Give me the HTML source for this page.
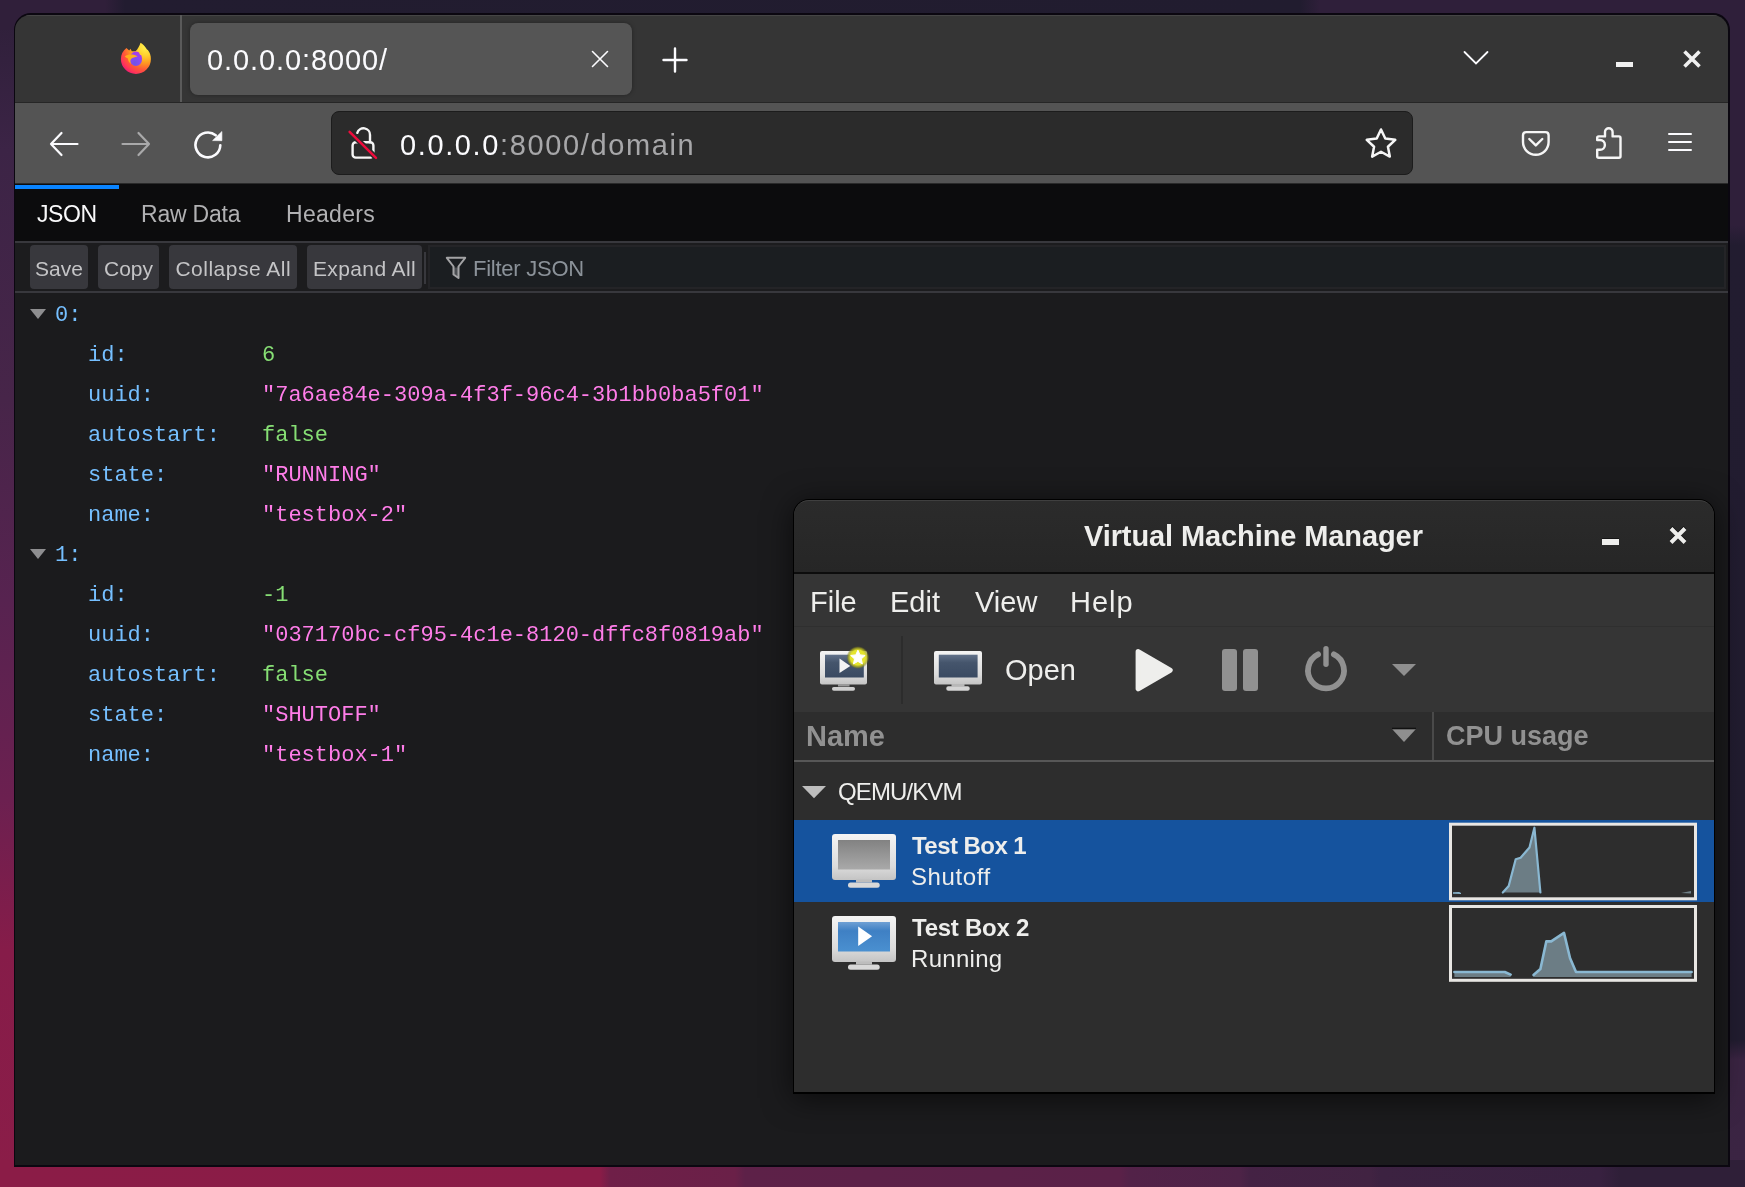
<!DOCTYPE html>
<html><head><meta charset="utf-8">
<style>
*{box-sizing:border-box;margin:0;padding:0}
html,body{width:1745px;height:1187px;overflow:hidden}
body>div,body>svg{will-change:transform}
body{position:relative;font-family:"Liberation Sans",sans-serif;background:#2a1f36;}
.a{position:absolute}
#bgr{left:1715px;top:0;width:30px;height:1187px;background:linear-gradient(180deg,#2f1f3a 0px,#2f1f3a 225px,#221c30 245px,#211c2f 1040px,#3a2442 1060px,#3b2443 1187px)}
#bgl{left:0;top:0;width:30px;height:1187px;background:linear-gradient(180deg,#2e2039 0px,#33213e 60px,#3c2446 150px,#472549 400px,#572350 600px,#6c2050 800px,#861c49 950px,#8b1d48 1187px)}
#bgt{left:0;top:0;width:1745px;height:30px;background:linear-gradient(90deg,#301f3a 0px,#301f3a 105px,#221c30 125px,#211c2f 1300px,#2f1f3a 1320px,#2f1f3a 1745px)}
#bgb{left:0;top:1160px;width:1745px;height:27px;background:linear-gradient(90deg,#8b1c47 0px,#8a1c47 600px,#6f1f48 610px,#6a2048 735px,#5d2148 745px,#5a2148 1120px,#522248 1130px,#4d2347 1240px,#442244 1250px,#412342 1370px,#3c2241 1380px,#382140 1600px,#2f1f38 1620px,#2f1f38 1745px)}
#ff{left:14px;top:13px;width:1716px;height:1154px;background:#0b0710;border-radius:17px 17px 0 0}
#ffi{left:15px;top:15px;width:1713px;height:1150px;background:#1b1b1d;border-radius:15.5px 15.5px 0 0;overflow:hidden}
#tabs{left:0;top:0;width:1713px;height:88px;background:#353535;border-top:1px solid #454545;border-bottom:1px solid #262626}
#nav{left:0;top:88px;width:1713px;height:80px;background:#545454}
#navb{left:0;top:168px;width:1713px;height:1px;background:#2a2a2a}
#jtabs{left:0;top:169px;width:1713px;height:57px;background:#0c0c0d}
#jline1{left:0;top:226px;width:1713px;height:2px;background:#38383d}
#jtool{left:0;top:228px;width:1713px;height:48px;background:#1c1c1e}
#jline2{left:0;top:276px;width:1713px;height:2px;background:#38383d}
.mono{font-family:"Liberation Mono",monospace;font-size:22px}
.mono span{white-space:pre}

.btn{top:245px;height:44px;background:#38383d;border-radius:4px;color:#c4c4c6;font-size:21px;line-height:47px;text-align:center}
#json .jr{position:relative;height:40px}
#json .k{position:absolute;left:88px;top:0;line-height:40px;color:#75bfff}
#json .v{position:absolute;left:262px;top:0;line-height:40px}
#json .n{color:#86de74}
#json .s{color:#ff7de9}
#json .tw{position:absolute;left:30px;top:13px;width:0;height:0;border-left:8px solid transparent;border-right:8px solid transparent;border-top:10px solid #8e8e90}

.vt{color:#eeeeec;white-space:pre}
</style></head><body>
<div class="a" id="bgl"></div><div class="a" id="bgt"></div><div class="a" id="bgr"></div>
<div class="a" id="bgb"></div>
<div class="a" id="ff"></div>
<div class="a" id="ffi">
 <div class="a" id="tabs"></div>
 <div class="a" id="nav"></div>
 <div class="a" id="navb"></div>
 <div class="a" id="jtabs"></div>
 <div class="a" id="jline1"></div>
 <div class="a" id="jtool"></div>
 <div class="a" id="jline2"></div>
</div>

<!-- firefox logo -->
<svg class="a" style="left:118px;top:40px" width="36" height="36" viewBox="0 0 36 36">
 <defs>
  <radialGradient id="fg1" cx="0.82" cy="0.12" r="1.05"><stop offset="0" stop-color="#fff44f"/><stop offset="0.28" stop-color="#ffd02e"/><stop offset="0.5" stop-color="#ff9a22"/><stop offset="0.7" stop-color="#ff5a36"/><stop offset="0.85" stop-color="#ff3756"/><stop offset="1" stop-color="#e8127c"/></radialGradient>
  <radialGradient id="fg2" cx="0.4" cy="0.8" r="0.9"><stop offset="0" stop-color="#6f54e6"/><stop offset="0.5" stop-color="#8c4af5"/><stop offset="1" stop-color="#b833e1"/></radialGradient>
 </defs>
 <path d="M8.4 7.9 C5 10.5 2.9 14.5 2.9 19 A15 15 0 0 0 32.9 19 C32.9 15.5 32 12.5 29.8 10 L29 9.5 C27 6 24.5 4 22.5 2.7 C21.5 6 19.5 9.5 17.5 11.2 L13.8 11.2 L12.5 8.8 L11.2 10.5 Z" fill="url(#fg1)"/>
 <ellipse cx="17.9" cy="18.8" rx="6.2" ry="7.3" fill="url(#fg2)"/>
 <path d="M21 12 C23 12.3 24.5 13.5 25.5 15 C24 14.5 23 14.6 22 15 Z" fill="#ffcf30"/>
 <path d="M6.8 16.5 C9 14.5 13 14 16.5 15 C18 15.5 19 16 19.5 16.5 C17 17.5 14.5 17.5 13 19 C12 20.5 12.3 22.5 13 24 C11 22.5 10 20.5 10 18.5 C8.5 18 7.5 17.3 6.8 16.5 Z" fill="#ffae1c"/>
</svg>
<div class="a" style="left:180px;top:15px;width:2px;height:87px;background:#5a5a5a"></div>
<!-- tab -->
<div class="a" style="left:190px;top:23px;width:442px;height:72px;background:#555555;border-radius:8px;box-shadow:0 0 4px rgba(0,0,0,0.35)"></div>
<div class="a" id="tabtitle" style="left:207px;top:43px;font-size:29px;letter-spacing:0.9px;color:#fbfbfe;white-space:pre;line-height:34px">0.0.0.0:8000/</div>
<svg class="a" style="left:590px;top:49px" width="20" height="20" viewBox="0 0 20 20"><path d="M2.5 2.5 L17.5 17.5 M17.5 2.5 L2.5 17.5" stroke="#fbfbfe" stroke-width="1.6" stroke-linecap="round"/></svg>
<svg class="a" style="left:661px;top:46px" width="28" height="28" viewBox="0 0 28 28"><path d="M14 2.5 V25.5 M2.5 14 H25.5" stroke="#fbfbfe" stroke-width="2.4" stroke-linecap="round"/></svg>
<svg class="a" style="left:1462px;top:48px" width="28" height="20" viewBox="0 0 28 20"><path d="M2.5 4 L14 15.5 L25.5 4" fill="none" stroke="#fbfbfe" stroke-width="1.8" stroke-linecap="round"/></svg>
<div class="a" style="left:1616px;top:62px;width:17px;height:5px;background:#f0f0f0"></div>
<svg class="a" style="left:1681px;top:48px" width="22" height="22" viewBox="0 0 22 22"><path d="M3.5 3.5 L18.5 18.5 M18.5 3.5 L3.5 18.5" stroke="#f0f0f0" stroke-width="3.6" stroke-linecap="butt"/></svg>
<!-- nav -->
<svg class="a" style="left:46px;top:128px" width="36" height="32" viewBox="0 0 36 32"><path d="M5 16 H31.5 M15.5 5 L5 16 L15.5 27" fill="none" stroke="#fbfbfe" stroke-width="2.2" stroke-linecap="round" stroke-linejoin="round"/></svg>
<svg class="a" style="left:118px;top:128px" width="36" height="32" viewBox="0 0 36 32"><path d="M4.5 16 H31 M20.5 5 L31 16 L20.5 27" fill="none" stroke="#a9a9aa" stroke-width="2.2" stroke-linecap="round" stroke-linejoin="round"/></svg>
<svg class="a" style="left:190px;top:127px" width="36" height="36" viewBox="0 0 36 36"><path d="M30.3 18.3 A12.4 12.4 0 1 1 25.7 8.3" fill="none" stroke="#fbfbfe" stroke-width="2.6" stroke-linecap="round"/><path d="M22.6 13.6 L31.9 4.5 L31.9 13.7 Z" fill="#fbfbfe" stroke="#fbfbfe" stroke-width="0.6" stroke-linejoin="round"/></svg>
<div class="a" style="left:331px;top:111px;width:1082px;height:64px;background:#2b2b2b;border:1px solid #1c1c1c;border-radius:8px"></div>
<svg class="a" style="left:346px;top:124px" width="34" height="38" viewBox="0 0 34 38"><path d="M11.3 8.8 A6.5 6.5 0 0 1 24 11 V18.2" fill="none" stroke="#f6f6f6" stroke-width="2.4" stroke-linecap="round"/><rect x="6.6" y="18.2" width="20.8" height="15.4" rx="3.2" fill="none" stroke="#f6f6f6" stroke-width="2.4"/><path d="M3.6 7.8 L30 33.8" stroke="#2b2b2b" stroke-width="5.5"/><path d="M3.6 7.8 L30 33.8" stroke="#ee0c3c" stroke-width="2.5" stroke-linecap="round"/></svg>
<div class="a" id="urltext" style="left:400px;top:127.5px;font-size:29px;letter-spacing:1.62px;color:#a7a7a9;white-space:pre;line-height:34px"><span style="color:#fbfbfe">0.0.0.0</span>:8000/domain</div>
<svg class="a" style="left:1362px;top:125px" width="38" height="36" viewBox="0 0 38 36"><path d="M19.00 4.46 L23.29 13.55 L33.27 14.82 L25.94 21.72 L27.82 31.60 L19.00 26.76 L10.18 31.60 L12.06 21.72 L4.73 14.82 L14.71 13.55 Z" fill="none" stroke="#f6f6f6" stroke-width="2.5" stroke-linejoin="round"/></svg>
<svg class="a" style="left:1519px;top:128px" width="34" height="32" viewBox="0 0 34 32"><path d="M4 14 V7.3 Q4 4.1 7.2 4.1 H26.4 Q29.6 4.1 29.6 7.3 V14 A12.8 12.8 0 0 1 4 14 Z" fill="none" stroke="#f6f6f6" stroke-width="2.4" stroke-linejoin="round"/><path d="M10.3 11 L16.8 17.4 L23.3 11" fill="none" stroke="#f6f6f6" stroke-width="2.4" stroke-linecap="round" stroke-linejoin="round"/></svg>
<svg class="a" style="left:1593px;top:124px" width="34" height="38" viewBox="0 0 34 38"><path d="M4.2 16 V13.9 Q4.2 12.4 5.7 12.4 H12 V8 A3.8 3.8 0 0 1 19.6 8 V12.4 H26 Q27.5 12.4 27.5 13.9 V32.3 Q27.5 33.8 26 33.8 H5.7 Q4.2 33.8 4.2 32.3 V25.8 H7 A4.9 4.9 0 0 0 7 16 Z" fill="none" stroke="#f6f6f6" stroke-width="2.4" stroke-linejoin="round"/></svg>
<div class="a" style="left:1668px;top:133px;width:24px;height:2.3px;background:#fbfbfe;border-radius:1px"></div>
<div class="a" style="left:1668px;top:141px;width:24px;height:2.3px;background:#fbfbfe;border-radius:1px"></div>
<div class="a" style="left:1668px;top:149px;width:24px;height:2.3px;background:#fbfbfe;border-radius:1px"></div>

<!-- devtools json viewer -->
<div class="a" style="left:15px;top:185px;width:104px;height:4px;background:#0a84ff"></div>
<div class="a" id="tJSON" style="left:37px;top:200px;font-size:23px;line-height:28px;color:#f9f9fa;letter-spacing:-0.4px">JSON</div>
<div class="a" id="tRaw" style="left:141px;top:200px;font-size:23px;line-height:28px;color:#b1b1b3;letter-spacing:-0.2px">Raw Data</div>
<div class="a" id="tHead" style="left:286px;top:200px;font-size:23px;line-height:28px;color:#b1b1b3;letter-spacing:0.3px">Headers</div>
<div class="a btn" style="left:30px;width:58px">Save</div>
<div class="a btn" style="left:98px;width:61px">Copy</div>
<div class="a btn" style="left:169px;width:128px;letter-spacing:0.5px;text-indent:0.5px">Collapse All</div>
<div class="a btn" style="left:307px;width:115px;letter-spacing:0.4px">Expand All</div>
<div class="a" style="left:424px;top:252px;width:2px;height:32px;background:#38383d"></div>
<div class="a" style="left:428px;top:245px;width:1298px;height:44px;background:#1b1e21;border:2px solid #242427"></div>
<svg class="a" style="left:443px;top:254px" width="26" height="28" viewBox="0 0 26 28"><path d="M10.5 13.5 L15.5 13.5 L15.5 23 L11 20.5 Z" fill="#4a4d51"/><path d="M3.8 3.8 H22.2 L15.5 12.5 V24 L10.5 20.5 V12.5 Z" fill="none" stroke="#a3a3a5" stroke-width="2" stroke-linejoin="round"/></svg>
<div class="a" id="tFilter" style="left:473px;top:256px;font-size:22px;line-height:26px;color:#8b9299;letter-spacing:-0.25px">Filter JSON</div>
<div class="a mono" id="json" style="left:0;top:295.5px;width:790px">
<div class="jr"><span class="tw"></span><span class="k" style="left:55px">0:</span></div>
<div class="jr"><span class="k">id:</span><span class="v n">6</span></div>
<div class="jr"><span class="k">uuid:</span><span class="v s">"7a6ae84e-309a-4f3f-96c4-3b1bb0ba5f01"</span></div>
<div class="jr"><span class="k">autostart:</span><span class="v n">false</span></div>
<div class="jr"><span class="k">state:</span><span class="v s">"RUNNING"</span></div>
<div class="jr"><span class="k">name:</span><span class="v s">"testbox-2"</span></div>
<div class="jr"><span class="tw"></span><span class="k" style="left:55px">1:</span></div>
<div class="jr"><span class="k">id:</span><span class="v n">-1</span></div>
<div class="jr"><span class="k">uuid:</span><span class="v s">"037170bc-cf95-4c1e-8120-dffc8f0819ab"</span></div>
<div class="jr"><span class="k">autostart:</span><span class="v n">false</span></div>
<div class="jr"><span class="k">state:</span><span class="v s">"SHUTOFF"</span></div>
<div class="jr"><span class="k">name:</span><span class="v s">"testbox-1"</span></div>
</div>

<!-- VMM window -->
<div class="a" style="left:793px;top:499px;width:922px;height:595px;background:#000;border-radius:16px 16px 0 0;box-shadow:0 4px 30px rgba(0,0,0,0.6)"></div>
<div class="a" style="left:794px;top:500px;width:920px;height:592px;background:#2d2d2d;border-radius:15px 15px 0 0;overflow:hidden">
 <div class="a" style="left:0;top:0;width:920px;height:72px;background:linear-gradient(#2b2b2b,#262626);border-top:1.5px solid #3f3f3f;border-radius:15px 15px 0 0"></div>
 <div class="a" style="left:0;top:72px;width:920px;height:2px;background:#0c0c0c"></div>
 <div class="a" style="left:0;top:74px;width:920px;height:52px;background:#353535"></div>
 <div class="a" style="left:0;top:126px;width:920px;height:1px;background:#2f2f2f"></div>
 <div class="a" style="left:0;top:127px;width:920px;height:85px;background:#353535"></div>
 <div class="a" style="left:0;top:212px;width:920px;height:48px;background:#2d2d2d"></div>
 <div class="a" style="left:0;top:260px;width:920px;height:2px;background:#575757"></div>
 <div class="a" style="left:638px;top:212px;width:2px;height:48px;background:#4a4a4a"></div>
 <div class="a" style="left:0;top:320px;width:920px;height:82px;background:#15539e"></div>
</div>
<div class="a vt" id="vtitle" style="left:1083.5px;top:518px;font-size:29px;font-weight:bold;line-height:36px;letter-spacing:-0.1px">Virtual Machine Manager</div>
<div class="a" style="left:1602px;top:538.5px;width:16.5px;height:6px;background:#eeeeec;box-shadow:0 -1px 0 #151515"></div>
<svg class="a" style="left:1666px;top:524px" width="24" height="24" viewBox="0 0 24 24"><path d="M5 4.5 L19 18.5 M19 4.5 L5 18.5" stroke="#111" stroke-width="4" transform="translate(0,-1)"/><path d="M5 4.5 L19 18.5 M19 4.5 L5 18.5" stroke="#eeeeec" stroke-width="4"/></svg>
<div class="a vt" style="left:810px;top:584px;font-size:29px;line-height:36px">File</div>
<div class="a vt" style="left:890px;top:584px;font-size:29px;line-height:36px">Edit</div>
<div class="a vt" style="left:974.5px;top:584px;font-size:29px;line-height:36px">View</div>
<div class="a vt" style="left:1069.5px;top:584px;font-size:29px;line-height:36px;letter-spacing:1px">Help</div>
<div class="a vt" style="left:1005px;top:652px;font-size:29px;line-height:36px">Open</div>
<div class="a" style="left:901px;top:636px;width:2px;height:68px;background:#2c2c2c"></div>
<div class="a vt" style="left:806px;top:718px;font-size:29px;font-weight:bold;line-height:36px;color:#919191">Name</div>
<div class="a vt" style="left:1446px;top:718px;font-size:27px;font-weight:bold;line-height:36px;color:#919191">CPU usage</div>
<div class="a vt" style="left:838px;top:775.5px;font-size:24px;line-height:32px;letter-spacing:-0.9px">QEMU/KVM</div>
<div class="a vt" style="left:912px;top:830px;font-size:24px;font-weight:bold;line-height:32px;letter-spacing:-0.55px">Test Box 1</div>
<div class="a vt" style="left:911px;top:861px;font-size:24px;line-height:32px;letter-spacing:0.6px">Shutoff</div>
<div class="a vt" style="left:912px;top:912px;font-size:24px;font-weight:bold;line-height:32px;letter-spacing:-0.25px">Test Box 2</div>
<div class="a vt" style="left:911px;top:943px;font-size:24px;line-height:32px;letter-spacing:0.3px">Running</div>

<svg width="0" height="0" style="position:absolute">
 <defs>
  <linearGradient id="bez" x1="0" y1="0" x2="0" y2="1"><stop offset="0" stop-color="#f4f4f4"/><stop offset="0.7" stop-color="#dcdcdc"/><stop offset="1" stop-color="#c4c4c4"/></linearGradient>
  <linearGradient id="scrD" x1="0" y1="0" x2="0" y2="1"><stop offset="0" stop-color="#62728a"/><stop offset="0.35" stop-color="#45556c"/><stop offset="1" stop-color="#3a4a62"/></linearGradient>
  <linearGradient id="scrG" x1="0" y1="0" x2="0" y2="1"><stop offset="0" stop-color="#828282"/><stop offset="1" stop-color="#a9a9a9"/></linearGradient>
  <linearGradient id="scrB" x1="0" y1="0" x2="0" y2="1"><stop offset="0" stop-color="#6fa0d4"/><stop offset="0.3" stop-color="#3f80c4"/><stop offset="1" stop-color="#4a90d0"/></linearGradient>
  <radialGradient id="glow" cx="0.5" cy="0.5" r="0.5"><stop offset="0" stop-color="#f4f440"/><stop offset="0.65" stop-color="#e2e22a"/><stop offset="0.85" stop-color="#a0a020" stop-opacity="0.7"/><stop offset="1" stop-color="#606020" stop-opacity="0"/></radialGradient>
 </defs>
</svg>
<!-- new vm icon -->
<svg class="a" style="left:818px;top:644px" width="54" height="50" viewBox="0 0 54 50">
 <rect x="2" y="7" width="47" height="33.5" rx="2" fill="url(#bez)"/>
 <rect x="7" y="10.7" width="38.8" height="22.8" fill="url(#scrD)"/>
 <rect x="20" y="40" width="11.5" height="2.5" fill="#9a9a9a"/>
 <rect x="14" y="42.9" width="23" height="3.8" rx="1.8" fill="#cfcfcf"/>
 <path d="M21.5 14.5 L32.3 22 L21.5 29 Z" fill="#f4f4f4"/>
 <circle cx="39.9" cy="13.5" r="11.5" fill="url(#glow)"/>
 <circle cx="39.9" cy="13.5" r="7.5" fill="#e4e42c"/>
 <path d="M39.90 6.20 L42.02 10.89 L47.13 11.45 L43.32 14.91 L44.37 19.95 L39.90 17.40 L35.43 19.95 L36.48 14.91 L32.67 11.45 L37.78 10.89 Z" fill="#ffffff" stroke="#ffffff" stroke-width="1" stroke-linejoin="round"/>
</svg>
<!-- open icon -->
<svg class="a" style="left:932px;top:649px" width="52" height="44" viewBox="0 0 52 44">
 <rect x="2" y="2" width="48" height="33.5" rx="2" fill="url(#bez)"/>
 <rect x="6.8" y="5.7" width="38.8" height="22.8" fill="url(#scrD)"/>
 <rect x="19.5" y="35" width="13" height="2.5" fill="#b8b8b8"/>
 <rect x="14.3" y="37.3" width="23.4" height="4.4" rx="2" fill="#d4d4d4"/>
</svg>
<!-- play -->
<svg class="a" style="left:1133px;top:646px" width="44" height="48" viewBox="0 0 44 48">
 <path d="M5.2 5.7 L37.1 24.2 L5.2 42.8 Z" fill="#eeeeec" stroke="#eeeeec" stroke-width="5.2" stroke-linejoin="round"/>
</svg>
<!-- pause -->
<div class="a" style="left:1222px;top:649px;width:15px;height:42px;background:#919191;border-radius:3px"></div>
<div class="a" style="left:1243px;top:649px;width:15px;height:42px;background:#919191;border-radius:3px"></div>
<!-- power -->
<svg class="a" style="left:1300px;top:643px" width="52" height="52" viewBox="0 0 52 52">
 <path d="M18.1 11.3 A18 18 0 1 0 33.9 11.3" fill="none" stroke="#919191" stroke-width="5.8" stroke-linecap="round"/>
 <path d="M26 5.8 V21.2" stroke="#919191" stroke-width="5.4" stroke-linecap="round"/>
</svg>
<!-- dropdown -->
<svg class="a" style="left:1390px;top:662px" width="28" height="16" viewBox="0 0 28 16"><path d="M2 2 H26 L14 14 Z" fill="#8f8f8f"/></svg>
<!-- header sort -->
<svg class="a" style="left:1390px;top:727px" width="28" height="18" viewBox="0 0 28 18"><path d="M2 2 H26 L14 15 Z" fill="#8f8f8f"/><path d="M2 1.5 H26" stroke="#111" stroke-width="1.6"/></svg>
<!-- tree expander -->
<svg class="a" style="left:800px;top:784px" width="28" height="16" viewBox="0 0 28 16"><path d="M2 2 H26 L14 14.3 Z" fill="#bdbdbd"/></svg>
<!-- list monitor 1 -->
<svg class="a" style="left:830px;top:832px" width="68" height="58" viewBox="0 0 68 58">
 <rect x="2" y="2" width="64" height="46" rx="3" fill="url(#bez)"/>
 <rect x="8" y="8" width="52" height="29.5" fill="url(#scrG)"/>
 <rect x="26" y="47.5" width="16" height="3" fill="#bdbdbd"/>
 <rect x="18" y="50.4" width="31.7" height="5.3" rx="2.5" fill="#d8d8d8"/>
</svg>
<!-- list monitor 2 -->
<svg class="a" style="left:830px;top:914px" width="68" height="58" viewBox="0 0 68 58">
 <rect x="2" y="2" width="64" height="46" rx="3" fill="url(#bez)"/>
 <rect x="8" y="8" width="52" height="29.5" fill="url(#scrB)"/>
 <path d="M28.2 12.4 L42.1 22.2 L28.2 32 Z" fill="#ffffff"/>
 <rect x="26" y="47.5" width="16" height="3" fill="#bdbdbd"/>
 <rect x="18" y="50.4" width="31.7" height="5.3" rx="2.5" fill="#d8d8d8"/>
</svg>
<!-- cpu graphs -->
<svg class="a" style="left:1449px;top:822px" width="248" height="160" viewBox="0 0 248 160">
 <rect x="1.5" y="2.2" width="245" height="74.6" fill="#2d2d2d" stroke="#e8e6e3" stroke-width="3"/>
 <path d="M4 71 L10 70.5 L12 71.5 Z" fill="#6f8088" stroke="#8bb8d0" stroke-width="1"/>
 <path d="M53.8 70.5 L59.7 64 L66.7 37.3 L71.6 35.7 L80.5 25.5 L85.4 5.7 L91.4 70.5 Z" fill="#6c7d85"/>
 <path d="M53.8 70.5 L59.7 64 L66.7 37.3 L71.6 35.7 L80.5 25.5 L85.4 5.7 L91.4 70.5" fill="none" stroke="#8ab8d2" stroke-width="2.2" stroke-linejoin="round" stroke-linecap="round"/>
 <path d="M232 71 L242 69 L242 71.5 Z" fill="#6f8088"/>
 <rect x="1.5" y="84.5" width="245" height="73.8" fill="#2d2d2d" stroke="#e8e6e3" stroke-width="3"/>
 <path d="M5.4 150 L55.8 150 L61.7 152.6 L61.7 155 L5.4 155 Z" fill="#6c7d85"/>
 <path d="M5.4 150 L55.8 150 L61.7 152.6" fill="none" stroke="#8ab8d2" stroke-width="2.6" stroke-linecap="round" stroke-linejoin="round"/>
 <path d="M84.5 153 L91.4 147 L97.3 119.4 L102.2 119.4 L115 110.9 L121 136 L127 150 L242.6 150 L242.6 155 L84.5 155 Z" fill="#6c7d85"/>
 <path d="M84.5 153 L91.4 147 L97.3 119.4 L102.2 119.4 L115 110.9 L121 136 L127 150 L242.6 150" fill="none" stroke="#8ab8d2" stroke-width="2.6" stroke-linecap="round" stroke-linejoin="round"/>
</svg>
</body></html>
